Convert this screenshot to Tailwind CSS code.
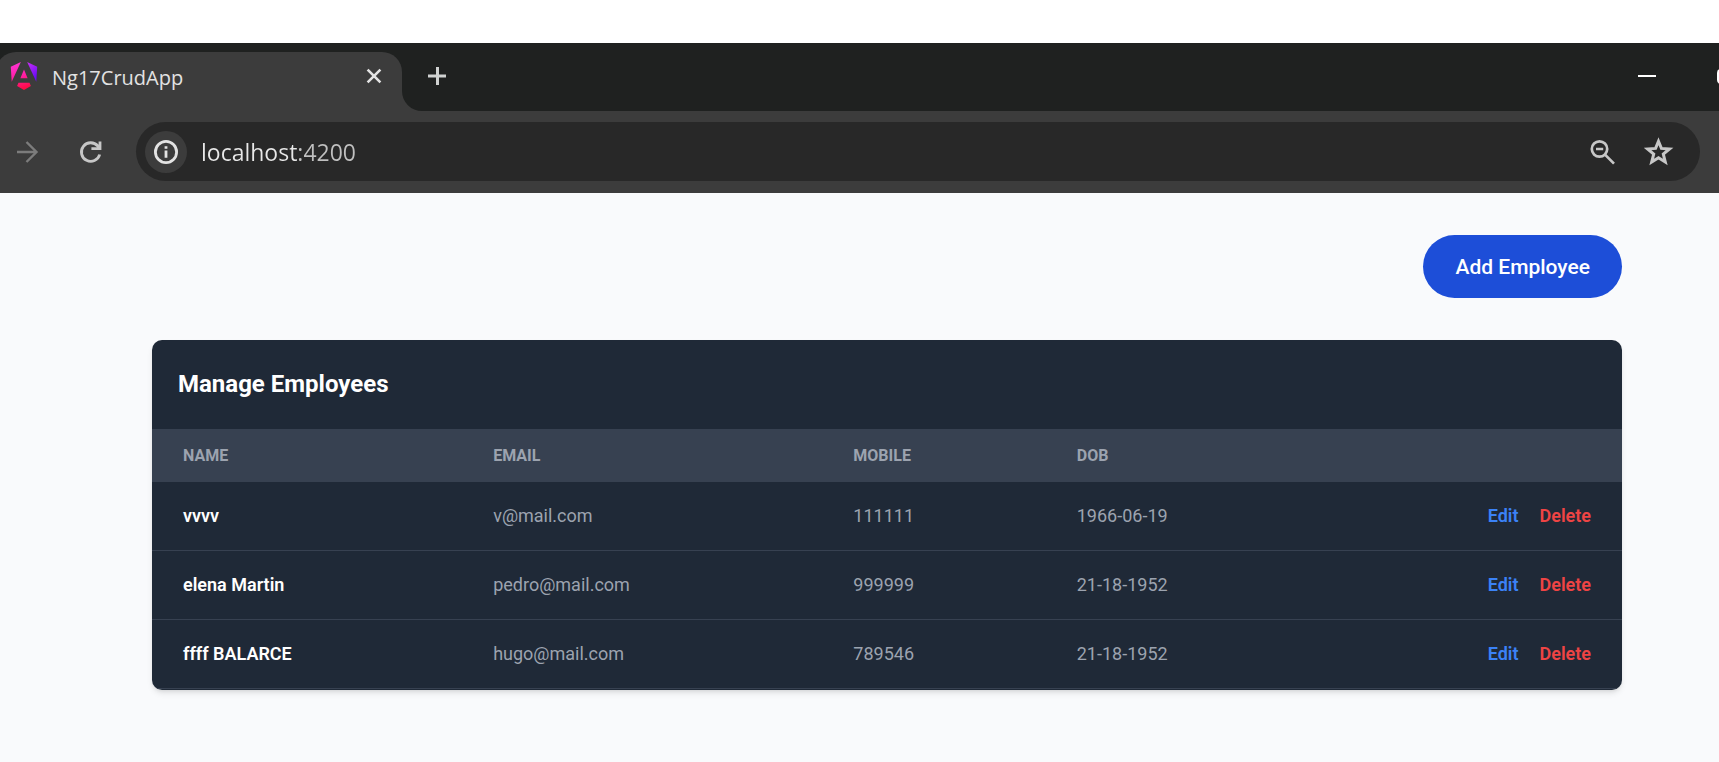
<!DOCTYPE html>
<html lang="en">
<head>
<meta charset="utf-8">
<meta name="viewport" content="width=device-width, initial-scale=1">
<title>Ng17CrudApp</title>
<script src="https://cdn.jsdelivr.net/npm/@tailwindcss/browser@4"></script>
</head>
<body class="flex min-h-screen flex-col overflow-x-hidden bg-white pt-[43px] font-['Roboto',sans-serif]">
  <header class="font-['Open_Sans',sans-serif] text-[#e3e3e3]">
    <!-- Tab strip -->
    <div class="flex h-[68px] items-end bg-[#1f2120]">
      <div class="relative -ml-1 flex h-[59px] w-[406px] shrink-0 items-center rounded-t-[20px] bg-[#3c3c3c] pb-[11px] pl-[14px] pr-[20px]">
        <svg class="size-7 shrink-0" viewBox="0 0 24 24" aria-hidden="true">
          <defs>
            <linearGradient id="ngPink" gradientUnits="userSpaceOnUse" x1="4" y1="0" x2="12" y2="24">
              <stop offset="0" stop-color="#ff35d6"/><stop offset=".5" stop-color="#ff1fa6"/><stop offset="1" stop-color="#ff0a3c"/>
            </linearGradient>
            <linearGradient id="ngViolet" gradientUnits="userSpaceOnUse" x1="15" y1="2" x2="23" y2="12">
              <stop offset="0" stop-color="#c02af5"/><stop offset="1" stop-color="#6a0cf5"/>
            </linearGradient>
          </defs>
          <path fill="url(#ngPink)" d="M16.712 17.711H7.288l-1.204 2.916L12 24l5.916-3.373zM9.308 0 .662 3.999l.814 12.856zM8.903 13.93h6.198L12 6.396z"/>
          <path fill="url(#ngViolet)" d="m14.692 0 7.832 16.855.814-12.856z"/>
        </svg>
        <span class="ml-[14px] flex-1 pt-1 text-[20px] leading-7">Ng17CrudApp</span>
        <button class="flex size-4 items-center justify-center" aria-label="Close tab">
          <svg class="size-4" viewBox="0 0 16 16" fill="none" stroke="currentColor" stroke-width="2.6" aria-hidden="true"><path d="M1.6 1.6l12.8 12.8M14.4 1.6 1.6 14.4"/></svg>
        </button>
        <svg class="absolute bottom-0 left-full size-5" viewBox="0 0 20 20" fill="#3c3c3c" aria-hidden="true"><path d="M0 0v20h20A20 20 0 0 1 0 0z"/></svg>
      </div>
      <button class="mb-[26px] ml-[26px] flex size-[18px] shrink-0" aria-label="New tab">
        <svg class="size-[18px]" viewBox="0 0 18 18" stroke="#d0d2d1" stroke-width="3" aria-hidden="true"><path d="M9.5 0v18M0 9h18"/></svg>
      </button>
      <div class="mb-[26px] ml-auto flex items-center gap-[61px]">
        <button class="flex size-[18px]" aria-label="Minimize">
          <svg class="size-[18px]" viewBox="0 0 18 18" fill="#fff" aria-hidden="true"><path d="M0 8h18v2H0z"/></svg>
        </button>
        <button class="flex h-[18px] w-[2px] items-center overflow-hidden" aria-label="Maximize">
          <svg class="h-[16px] w-[16px] shrink-0" viewBox="0 0 16 16" fill="none" stroke="#fff" stroke-width="2" aria-hidden="true"><rect x="1" y="2" width="13" height="13" rx="3"/></svg>
        </button>
      </div>
    </div>
    <!-- Toolbar -->
    <div class="flex h-[82px] items-center bg-[#3c3c3c] pb-px pl-[16px] pr-[19px]">
      <button class="flex size-6" aria-label="Forward">
        <svg class="size-6" viewBox="0 0 24 24" fill="none" stroke="#7c7c7c" stroke-width="2.4" aria-hidden="true"><path d="M1 12h20M10.5 2 20.5 12l-10 10"/></svg>
      </button>
      <button class="ml-[36px] flex size-7" aria-label="Reload">
        <svg class="size-7" viewBox="0 0 28 28" fill="none" stroke="#c7c7c7" stroke-width="2.8" aria-hidden="true"><path d="M23.7 16.5A9.3 9.3 0 1 1 21.8 8l2 2.4M24 3.6v7.1h-8.6"/></svg>
      </button>
      <div class="ml-8 flex h-[59px] flex-1 items-center rounded-full bg-[#282828] pl-[9px] pr-[26px]">
        <button class="flex size-[42px] shrink-0 items-center justify-center rounded-full bg-[#3c3c3c]" aria-label="View site information">
          <svg class="size-6" viewBox="0 0 24 24" aria-hidden="true"><circle cx="12" cy="12" r="10.6" fill="none" stroke="#e3e3e3" stroke-width="2.8"/><path fill="#e3e3e3" d="M10.6 10.4h2.8v7.4h-2.8zM10.6 6.2h2.8v2.6h-2.8z"/></svg>
        </button>
        <input type="text" aria-label="Address" value="localhost:4200" class="ml-[14px] min-w-0 flex-1 bg-linear-to-r from-[#e8e8e8] from-[97px] to-[#c0c0c0] to-[97px] bg-clip-text text-[23px] leading-8 text-transparent outline-none">
        <button class="flex size-7 shrink-0" aria-label="Zoom">
          <svg class="size-7" viewBox="0 0 28 28" fill="none" stroke="#c7c7c7" stroke-width="2.7" aria-hidden="true"><circle cx="10.5" cy="11" r="7.7"/><path d="M16 16.6 25 25.6M7 11h7.2"/></svg>
        </button>
        <button class="ml-[27px] flex size-[30px] shrink-0" aria-label="Bookmark this tab">
          <svg class="size-[30px]" viewBox="0 0 30 30" fill="none" stroke="#c7c7c7" stroke-width="3" aria-hidden="true"><path d="m14.5 4.3 2.9 7.1 8.1.6-6.2 5 2 8.1-6.8-4.3-6.8 4.3 2-8.1-6.2-5 8.1-.6z"/></svg>
        </button>
      </div>
    </div>
  </header>

  <main class="flex flex-1 flex-col gap-[42px] bg-[#f9fafc] pb-[72px] pl-[152px] pr-[97px] pt-[42px]">
    <button class="self-end rounded-full bg-[#1d4ed8] px-8 pb-4 pt-[18px] text-[21px] font-medium leading-[29px] text-white">Add Employee</button>
    <section class="overflow-hidden rounded-[10px] bg-[#1f2937] pb-px shadow-md">
      <h1 class="px-[26px] py-[26px] text-[24px] font-bold leading-[37px] text-white">Manage Employees</h1>
      <table class="w-full table-fixed text-left text-[18px] leading-[26px] text-[#9ca3af]">
        <thead class="bg-[#374151] text-[16px] uppercase leading-[21px]">
          <tr>
            <th scope="col" class="w-[21.1%] px-[31px] py-4 font-bold">Name</th>
            <th scope="col" class="w-[24.5%] px-[31px] py-4 font-bold">Email</th>
            <th scope="col" class="w-[15.2%] px-[31px] py-4 font-bold">Mobile</th>
            <th scope="col" class="px-[31px] py-4 font-bold">DOB</th>
            <th scope="col" class="px-[31px] py-4" aria-label="Actions"></th>
          </tr>
        </thead>
        <tbody>
          <tr class="border-b border-[#374151]">
            <th scope="row" class="px-[31px] py-[21px] font-semibold text-white">vvvv</th>
            <td class="px-[31px]">v@mail.com</td><td class="px-[31px]">111111</td><td class="px-[31px]">1966-06-19</td>
            <td class="px-[31px] text-right font-semibold"><a href="#" class="text-[#3b82f6]">Edit</a><a href="#" class="ml-[21px] text-[#ef4444]">Delete</a></td>
          </tr>
          <tr class="border-b border-[#374151]">
            <th scope="row" class="px-[31px] py-[21px] font-semibold text-white">elena Martin</th>
            <td class="px-[31px]">pedro@mail.com</td><td class="px-[31px]">999999</td><td class="px-[31px]">21-18-1952</td>
            <td class="px-[31px] text-right font-semibold"><a href="#" class="text-[#3b82f6]">Edit</a><a href="#" class="ml-[21px] text-[#ef4444]">Delete</a></td>
          </tr>
          <tr class="border-b border-[#374151]">
            <th scope="row" class="px-[31px] py-[21px] font-semibold text-white">ffff BALARCE</th>
            <td class="px-[31px]">hugo@mail.com</td><td class="px-[31px]">789546</td><td class="px-[31px]">21-18-1952</td>
            <td class="px-[31px] text-right font-semibold"><a href="#" class="text-[#3b82f6]">Edit</a><a href="#" class="ml-[21px] text-[#ef4444]">Delete</a></td>
          </tr>
        </tbody>
      </table>
    </section>
  </main>
</body>
</html>
